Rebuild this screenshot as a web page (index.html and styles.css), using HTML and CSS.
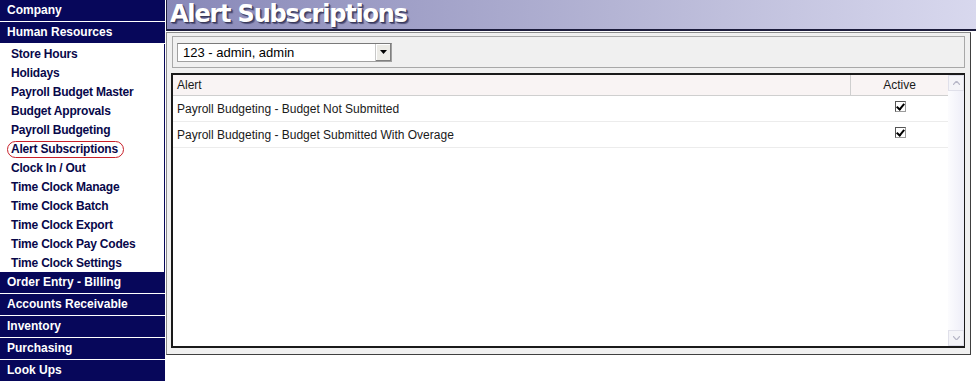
FILE: index.html
```html
<!DOCTYPE html>
<html lang="en">
<head>
    <meta charset="UTF-8">
    <title>Alert Subscriptions</title>
    <link rel="stylesheet" href="styles.css">
</head>
<body>
    <div class="page">
        <div class="sidebar">
            <div class="menu-head">Company</div>
            <div class="menu-head">Human Resources</div>
            <ul class="menu-list">
                <li>Store Hours</li>
                <li>Holidays</li>
                <li>Payroll Budget Master</li>
                <li>Budget Approvals</li>
                <li>Payroll Budgeting</li>
                <li><span class="current">Alert Subscriptions</span></li>
                <li>Clock In / Out</li>
                <li>Time Clock Manage</li>
                <li>Time Clock Batch</li>
                <li>Time Clock Export</li>
                <li>Time Clock Pay Codes</li>
                <li>Time Clock Settings</li>
            </ul>
            <div class="menu-head">Order Entry - Billing</div>
            <div class="menu-head">Accounts Receivable</div>
            <div class="menu-head">Inventory</div>
            <div class="menu-head">Purchasing</div>
            <div class="menu-head last">Look Ups</div>
        </div>

        <div class="main">
            <div class="title-bar">
                <h1>Alert Subscriptions</h1>
            </div>
            <div class="panel">
                <div class="user-box">
                    <div class="select">
                        <span class="select-text">123 - admin, admin</span>
                        <span class="select-btn">
                            <svg width="7" height="4" viewBox="0 0 7 4"><path d="M0 0h7L3.5 4z" fill="#000"/></svg>
                        </span>
                    </div>
                </div>
                <div class="grid">
                    <div class="grid-body">
                        <div class="row head">
                            <div class="cell alert">Alert</div>
                            <div class="cell active">Active</div>
                        </div>
                        <div class="row">
                            <div class="cell alert">Payroll Budgeting - Budget Not Submitted</div>
                            <div class="cell active"><span class="check"></span></div>
                        </div>
                        <div class="row">
                            <div class="cell alert">Payroll Budgeting - Budget Submitted With Overage</div>
                            <div class="cell active"><span class="check"></span></div>
                        </div>
                    </div>
                    <div class="scrollbar">
                        <span class="arrow">
                            <svg width="7" height="4" viewBox="0 0 7 4"><path d="M0 4L3.5 0 7 4" fill="none" stroke="#b8b8c8" stroke-width="1.2"/></svg>
                        </span>
                        <span class="track"></span>
                        <span class="arrow">
                            <svg width="7" height="4" viewBox="0 0 7 4"><path d="M0 0L3.5 4 7 0" fill="none" stroke="#b8b8c8" stroke-width="1.2"/></svg>
                        </span>
                    </div>
                </div>
            </div>
        </div>
    </div>
</body>
</html>
```

FILE: styles.css
```css
body {
    margin: 0;
    font-family: "Liberation Sans", Arial, sans-serif;
    background: #fff;
}
.page {
    display: flex;
    width: 976px;
    height: 381px;
    overflow: hidden;
}
.sidebar {
    width: 165px;
    flex-shrink: 0;
    display: flex;
    flex-direction: column;
    background: #07075a;
}
.menu-head {
    height: 21px;
    line-height: 21px;
    padding-left: 7px;
    color: #fff;
    font-size: 12px;
    font-weight: bold;
    border-bottom: 1px solid #fff;
}
.menu-head.last {
    border-bottom: none;
}
.menu-list {
    list-style: none;
    margin: 0;
    padding: 0;
    background: #fff;
    border-right: 1px solid #07075a;
    height: 228px;
    flex-shrink: 0;
}
.menu-list li {
    height: 18px;
    padding-top: 1px;
    line-height: 19px;
    padding-left: 11px;
    color: #08084a;
    font-size: 12px;
    font-weight: bold;
    letter-spacing: -0.2px;
}
.current {
    display: inline-block;
    margin-left: -4px;
    padding: 0 5px 0 3px;
    height: 15px;
    line-height: 15px;
    border: 1px solid #c8202a;
    border-radius: 9px;
}
.main {
    flex: 1;
    margin-left: 1px;
    display: flex;
    flex-direction: column;
    background: #fff;
}
.title-bar {
    height: 29px;
    background: linear-gradient(to right, #8888b8, #b4b4d4 55%, #d8d8ee);
    border-bottom: 2px solid #1c1c3c;
    border-left: 1px solid #1c1c3c;
}
.title-bar h1 {
    margin: 0;
    padding-left: 3px;
    font-family: "DejaVu Sans", Verdana, sans-serif;
    font-size: 24px;
    line-height: 29px;
    font-weight: bold;
    color: #fff;
    letter-spacing: -1.2px;
    text-shadow: 1px 1px 0 #3a3a5a, 2px 2px 1px #50507a;
}
.panel {
    margin-top: 1px;
    width: 805px;
    height: 323px;
    box-sizing: border-box;
    background: #f0f0f0;
    border: 1px solid #8a8a8a;
    border-right-color: #404040;
    border-bottom-color: #404040;
    padding: 3px 4px 0 4px;
    display: flex;
    flex-direction: column;
}
.user-box {
    height: 30px;
    margin-left: 1px;
    margin-right: 1px;
    border: 1px solid #a8a8a8;
    display: flex;
    align-items: center;
    padding-left: 4px;
}
.select {
    width: 215px;
    height: 19px;
    box-sizing: border-box;
    background: #fff;
    border: 1px solid #a0a0a0;
    border-top-color: #7a7a7a;
    display: flex;
    align-items: center;
}
.select-text {
    flex: 1;
    padding-left: 5px;
    font-size: 13px;
    color: #000;
}
.select-btn {
    width: 15px;
    height: 17px;
    background: #ecebe6;
    border-left: 1px solid #c8c8c8;
    box-shadow: inset -1px -1px 0 #808080, inset 1px 1px 0 #fff;
    display: flex;
    align-items: center;
    justify-content: center;
}
.grid {
    margin-top: 5px;
    width: 794px;
    height: 275px;
    box-sizing: border-box;
    border: 2px solid #1a1a1a;
    border-right-width: 1px;
    background: #fff;
    display: flex;
}
.grid-body {
    flex: 1;
}
.row {
    display: flex;
    height: 25px;
    border-bottom: 1px solid #ececec;
    font-size: 12px;
    color: #1a1a1a;
}
.row.head {
    height: 20px;
    background: #f9f4f4;
    border-bottom: 1px solid #cfcfcf;
}
.cell {
    display: flex;
    align-items: center;
}
.cell.alert {
    flex: 1;
    padding-left: 4px;
}
.cell.active {
    width: 97px;
    justify-content: center;
}
.row.head .cell.active {
    border-left: 1px solid #cfcfcf;
}
.check {
    width: 11px;
    height: 11px;
    box-sizing: border-box;
    border: 1px solid #9a9a9a;
    border-top-color: #555;
    border-left-color: #555;
    margin-left: 2px;
    margin-top: -4px;
    position: relative;
    background: #fff;
}
.check::after {
    content: "";
    position: absolute;
    left: 2px;
    top: 0px;
    width: 3px;
    height: 6px;
    border: solid #000;
    border-width: 0 2px 2px 0;
    transform: rotate(40deg);
}
.scrollbar {
    width: 16px;
    display: flex;
    flex-direction: column;
    background: linear-gradient(to right, #fcfcfe, #eeeef8);
}
.arrow {
    height: 16px;
    display: flex;
    align-items: center;
    justify-content: center;
    background: #f4f4f8;
    border: 1px solid #e0e0ea;
    box-sizing: border-box;
}
.track {
    flex: 1;
}
```
